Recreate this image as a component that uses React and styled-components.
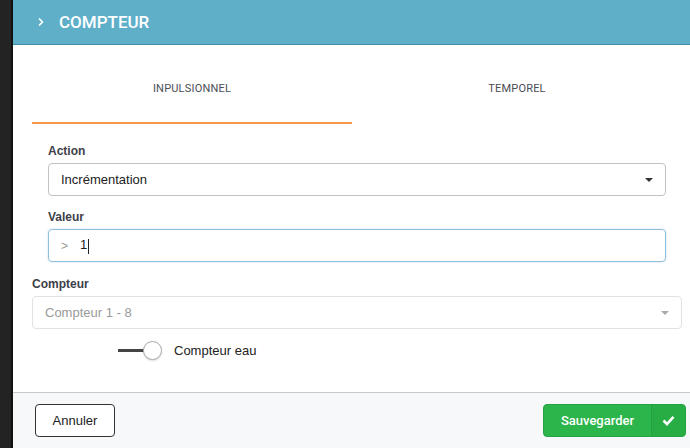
import React from 'react'
import styled, { createGlobalStyle } from 'styled-components'

const Global = createGlobalStyle`
    html, body {
        margin: 0;
        padding: 0;
        background: #222222;
        font-family: "Liberation Sans", Arial, sans-serif;
    }
`

const Screen = styled.div`
    display: flex;
    width: 690px;
    height: 448px;
    overflow: hidden;
`
const Side = styled.div`
    width: 11px;
    background: #232323;
    border-right: 2px solid #111;
    flex-shrink: 0;
`
const Panel = styled.div`
    flex: 1;
    display: flex;
    flex-direction: column;
    background: #fff;
`
const Header = styled.div`
    height: 44px;
    background: #5fafc9;
    border-bottom: 1px solid #3f8aa5;
    display: flex;
    align-items: center;
    padding-left: 24px;
    gap: 14px;
    color: #fff;
    font-family: Roboto, "Liberation Sans", sans-serif;
    font-size: 17px;
    font-weight: 500;
`
const Body = styled.div`
    flex: 1;
    display: flex;
    flex-direction: column;
    padding: 0 8px 0 19px;
`
const Tabs = styled.div`
    display: flex;
    height: 79px;
    margin-bottom: 20px;
`
const Tab = styled.div`
    width: ${p => (p.active ? '320px' : 'auto')};
    flex: ${p => (p.active ? 'none' : 1)};
    display: flex;
    align-items: center;
    justify-content: center;
    font-family: Roboto, "Liberation Sans", sans-serif;
    font-size: 11px;
    color: #4a4d55;
    letter-spacing: 0.2px;
    padding-top: 10px;
    box-sizing: border-box;
    border-bottom: 2px solid ${p => (p.active ? '#f79548' : 'transparent')};
`
const Group = styled.div`
    display: flex;
    flex-direction: column;
    margin-left: ${p => p.indent || 0}px;
    margin-right: ${p => p.indent || 0}px;
    margin-bottom: ${p => p.gap || 0}px;
`
const Label = styled.div`
    font-size: 12px;
    line-height: 14px;
    font-weight: bold;
    color: #3d4048;
    margin-bottom: 5px;
`
const Field = styled.div`
    height: 33px;
    box-sizing: border-box;
    border: 1px solid ${p => (p.focus ? '#8fbfdc' : p.muted ? '#e2e2e2' : '#c2c2c2')};
    border-radius: 4px;
    display: flex;
    align-items: center;
    padding: 0 12px;
    font-size: 13px;
    color: ${p => (p.muted ? '#9a9a9a' : '#222')};
    box-shadow: ${p => (p.focus ? '0 0 2px rgba(100,160,210,0.4)' : 'none')};
`
const Grow = styled.span`
    flex: 1;
`
const Caret = styled.span`
    width: 0;
    height: 0;
    border-left: 4px solid transparent;
    border-right: 4px solid transparent;
    border-top: 4px solid ${p => (p.muted ? '#aaa' : '#333')};
`
const Prefix = styled.span`
    color: #999;
    font-size: 12px;
    margin-right: 12px;
`
const Cursor = styled.span`
    display: inline-block;
    width: 1px;
    height: 15px;
    background: #222;
    margin-left: 1px;
    vertical-align: middle;
`
const ToggleRow = styled.div`
    display: flex;
    align-items: center;
    padding-left: 86px;
    margin-top: 12px;
    gap: 12px;
    font-size: 13px;
    color: #222;
`
const Toggle = styled.div`
    display: flex;
    align-items: center;
`
const Track = styled.div`
    width: 26px;
    height: 3px;
    background: #444;
`
const Knob = styled.div`
    width: 17px;
    height: 17px;
    border-radius: 50%;
    background: #fff;
    border: 1px solid #aaa;
    box-shadow: 0 1px 2px rgba(0,0,0,0.15);
    margin-left: -1px;
`
const Footer = styled.div`
    height: 55px;
    background: #f7f8fa;
    border-top: 1px solid #c8c8c8;
    display: flex;
    align-items: center;
    justify-content: space-between;
    padding: 0 4px 0 22px;
`
const Cancel = styled.button`
    width: 80px;
    height: 33px;
    border: 1px solid #333;
    border-radius: 4px;
    background: #fff;
    font-family: "Liberation Sans", Arial, sans-serif;
    font-size: 13px;
    color: #222;
`
const Save = styled.button`
    display: flex;
    height: 33px;
    border: 1px solid #25a244;
    border-radius: 4px;
    background: #2cb54a;
    padding: 0;
    overflow: hidden;
    color: #fff;
    font-family: Roboto, "Liberation Sans", sans-serif;
    font-size: 13px;
    font-weight: 500;
`
const SaveText = styled.span`
    width: 107px;
    display: flex;
    align-items: center;
    justify-content: center;
    height: 100%;
`
const SaveIcon = styled.span`
    width: 33px;
    display: flex;
    align-items: center;
    justify-content: center;
    height: 100%;
    background: #28ac44;
    border-left: 1px solid #25a040;
`

const Chevron = () => (
    <svg width="8" height="10" viewBox="0 0 8 10">
        <path d="M2 1.5 L5.5 5 L2 8.5" stroke="#fff" strokeWidth="1.6" fill="none" />
    </svg>
)

const Check = () => (
    <svg width="13" height="11" viewBox="0 0 13 11">
        <path d="M1.5 5.5 L5 9 L11.5 1.8" stroke="#fff" strokeWidth="2.6" fill="none" />
    </svg>
)

const App = () => {
    return (
        <Screen>
            <Global />
            <Side />
            <Panel>
                <Header>
                    <Chevron />
                    <span>COMPTEUR</span>
                </Header>
                <Body>
                    <Tabs>
                        <Tab active>INPULSIONNEL</Tab>
                        <Tab>TEMPOREL</Tab>
                    </Tabs>
                    <Group indent={16} gap={14}>
                        <Label>Action</Label>
                        <Field>
                            <Grow>Incrémentation</Grow>
                            <Caret />
                        </Field>
                    </Group>
                    <Group indent={16} gap={15}>
                        <Label>Valeur</Label>
                        <Field focus>
                            <Prefix>&gt;</Prefix>
                            <Grow>1<Cursor /></Grow>
                        </Field>
                    </Group>
                    <Group>
                        <Label>Compteur</Label>
                        <Field muted>
                            <Grow>Compteur 1 - 8</Grow>
                            <Caret muted />
                        </Field>
                    </Group>
                    <ToggleRow>
                        <Toggle>
                            <Track />
                            <Knob />
                        </Toggle>
                        <span>Compteur eau</span>
                    </ToggleRow>
                </Body>
                <Footer>
                    <Cancel>Annuler</Cancel>
                    <Save>
                        <SaveText>Sauvegarder</SaveText>
                        <SaveIcon><Check /></SaveIcon>
                    </Save>
                </Footer>
            </Panel>
        </Screen>
    )
}

export default App
